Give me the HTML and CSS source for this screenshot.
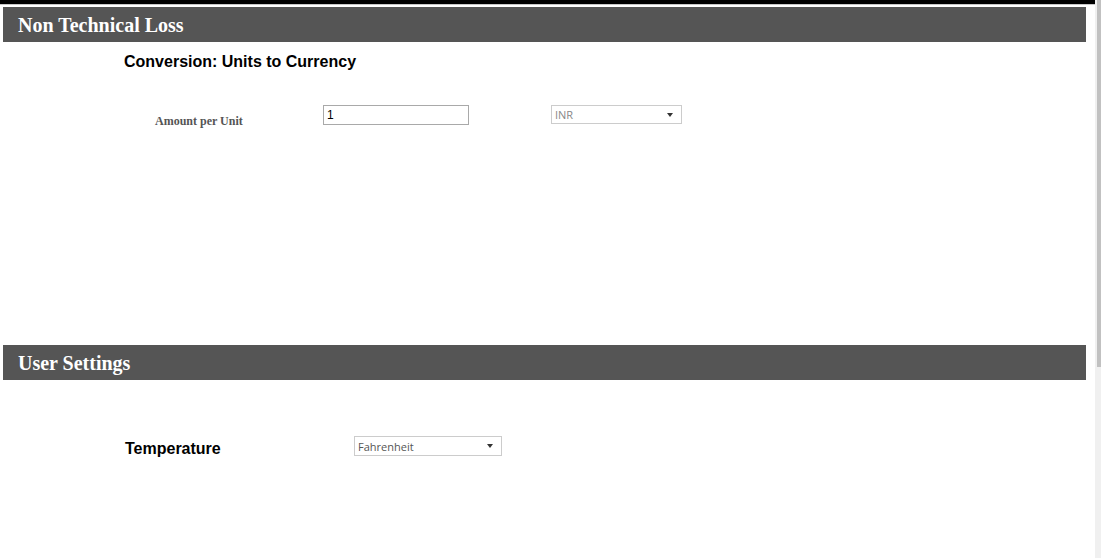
FILE: index.html
```html
<!DOCTYPE html>
<html>
<head>
<meta charset="utf-8">
<link rel="stylesheet" href="styles.css">
</head>
<body>
<div class="topbar"></div>
<main class="page">
  <section class="panel panel-ntl">
    <h2 class="panel-head">Non Technical Loss</h2>
    <h3 class="sub-title">Conversion: Units to Currency</h3>
    <div class="row amount-row">
      <span class="amount-label">Amount per Unit</span>
      <div class="text-input">1</div>
      <div class="select select-inr"><span>INR</span><span class="caret"></span></div>
    </div>
  </section>
  <section class="panel panel-user">
    <h2 class="panel-head">User Settings</h2>
    <div class="row temp-row">
      <span class="temp-label">Temperature</span>
      <div class="select select-temp"><span>Fahrenheit</span><span class="caret"></span></div>
    </div>
  </section>
</main>
<div class="scrollbar"><div class="thumb"></div></div>
</body>
</html>
```
FILE: styles.css
```css
html, body {
  margin: 0;
  padding: 0;
  background: #fff;
  overflow: hidden;
}
.topbar {
  height: 4px;
  background: #000;
  border-bottom: 1px solid #c8c8c8;
  margin-right: 6px;
}
.page {
  padding: 2px 0 0 3px;
  width: 1083px;
}
.panel-head {
  margin: 0;
  height: 35px;
  line-height: 37px;
  background: #555555;
  color: #fff;
  font-family: "Liberation Serif", serif;
  font-weight: bold;
  font-size: 20px;
  padding-left: 15px;
}
.panel-ntl {
  height: 338px;
}
.sub-title {
  margin: 0;
  padding: 11px 0 0 121px;
  font-family: "Liberation Sans", Arial, sans-serif;
  font-weight: bold;
  font-size: 16px;
  line-height: 18px;
  color: #000;
}
.row {
  display: flex;
  align-items: center;
}
.amount-row {
  padding: 29px 0 0 152px;
}
.amount-label {
  width: 168px;
  font-family: "Liberation Serif", serif;
  font-weight: bold;
  font-size: 12px;
  color: #555;
  padding-top: 14px;
}
.text-input {
  box-sizing: border-box;
  width: 146px;
  height: 20px;
  border: 1px solid #a9a9a9;
  font-family: "Liberation Sans", Arial, sans-serif;
  font-size: 12px;
  line-height: 18px;
  padding-left: 3px;
  color: #000;
  margin-right: 82px;
}
.select {
  box-sizing: border-box;
  display: flex;
  align-items: center;
  justify-content: space-between;
  border: 1px solid #ccc;
  font-family: "Open Sans", "DejaVu Sans", sans-serif;
  font-size: 11px;
  padding: 0 8px 0 3px;
  background: #fff;
}
.select-inr {
  width: 131px;
  height: 19px;
  color: #888;
}
.caret {
  width: 0;
  height: 0;
  border-left: 3.5px solid transparent;
  border-right: 3.5px solid transparent;
  border-top: 4px solid #333;
}
.temp-row {
  padding: 54px 0 0 122px;
}
.temp-label {
  width: 229px;
  font-family: "Liberation Sans", Arial, sans-serif;
  font-weight: bold;
  font-size: 16px;
  color: #000;
  padding-top: 6px;
}
.select-temp {
  width: 148px;
  height: 20px;
  color: #555;
}
.scrollbar {
  position: fixed;
  top: 0;
  right: 0;
  width: 6px;
  height: 100%;
  background: #f0f0f0;
}
.thumb {
  margin-left: 2px;
  height: 367px;
  background: #c1c1c1;
}
```
